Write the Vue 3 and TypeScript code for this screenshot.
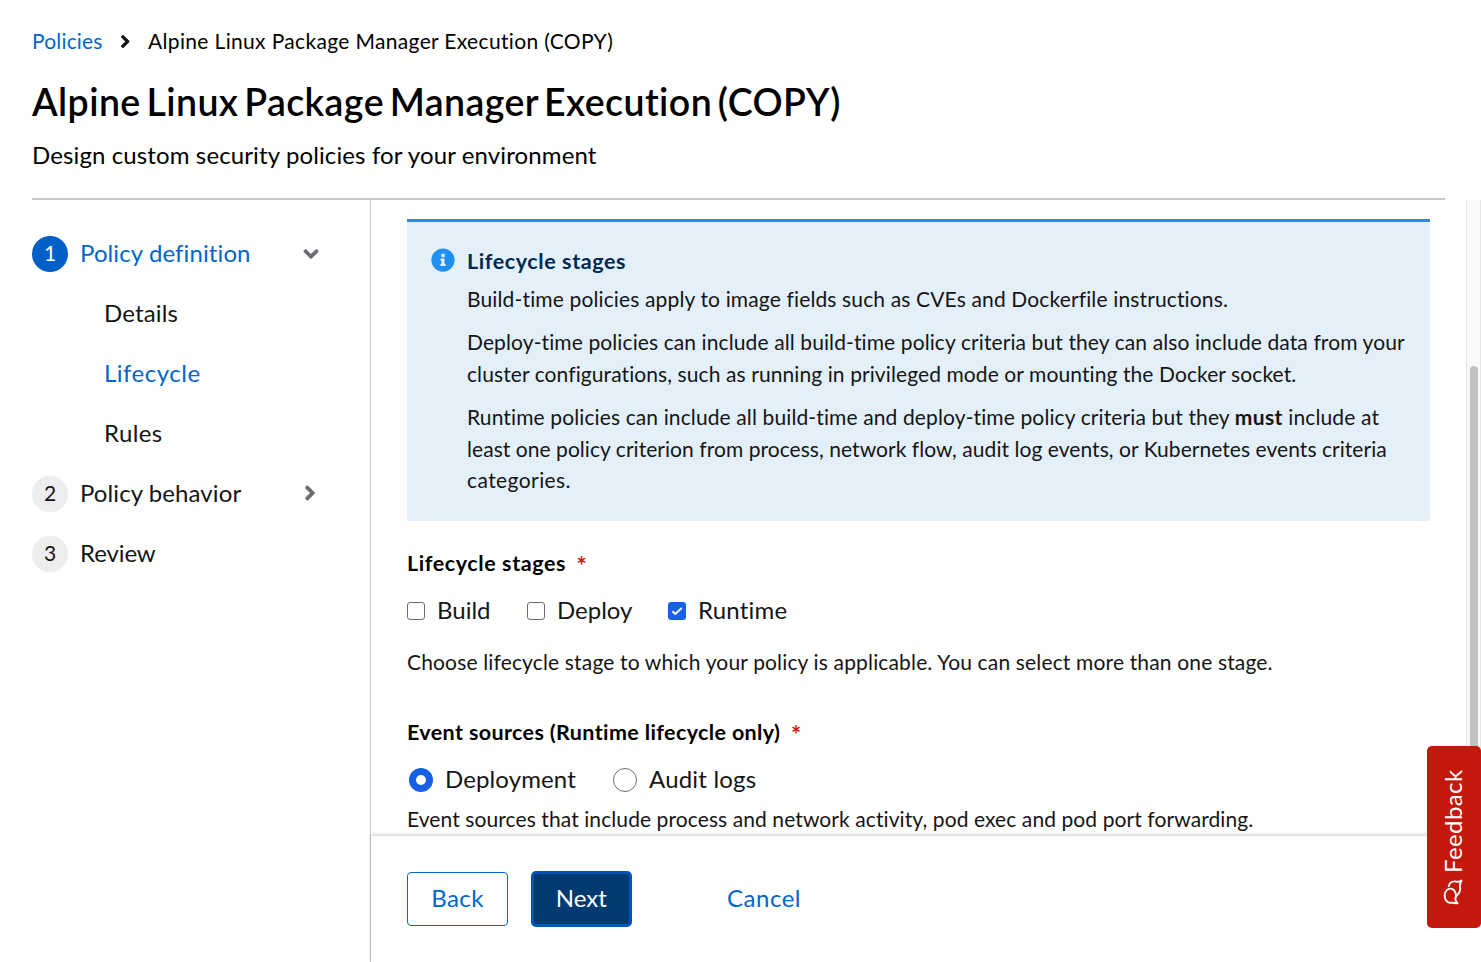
<script setup lang="ts">
interface SubStep { label: string; cls: string; current?: boolean }
interface Step { id: number; label: string; cls: string; current?: boolean; open?: boolean; children?: SubStep[]; expandable?: boolean }

const steps: Step[] = [
  {
    id: 1, label: 'Policy definition', cls: 't-def', current: true, expandable: true, open: true,
    children: [
      { label: 'Details', cls: 't-details' },
      { label: 'Lifecycle', cls: 't-life', current: true },
      { label: 'Rules', cls: 't-rules' },
    ],
  },
  { id: 2, label: 'Policy behavior', cls: 't-beh', expandable: true },
  { id: 3, label: 'Review', cls: 't-review' },
]

const stages = [
  { label: 'Build', checked: false, cls: 'c-build' },
  { label: 'Deploy', checked: false, cls: 'c-deploy' },
  { label: 'Runtime', checked: true, cls: 'c-runtime' },
]
const sources = [
  { label: 'Deployment', checked: true, cls: 'r-dep' },
  { label: 'Audit logs', checked: false, cls: 'r-audit' },
]
const angle = 'M224.3 273l-136 136c-9.4 9.4-24.6 9.4-33.9 0l-22.6-22.6c-9.4-9.4-9.4-24.6 0-33.9l96.4-96.4-96.4-96.4c-9.4-9.4-9.4-24.6 0-33.9L54.3 103c9.4-9.4 24.6-9.4 33.9 0l136 136c9.5 9.4 9.5 24.6.1 34z'
</script>

<template>
  <div class="page">
    <header class="head">
      <nav class="crumbs">
        <a class="crumb-link">Policies</a>
        <svg class="crumb-sep" viewBox="0 0 256 512"><path :d="angle" /></svg>
        <span class="crumb-cur">Alpine Linux Package Manager Execution (COPY)</span>
      </nav>
      <h1 class="title">Alpine Linux Package Manager Execution (COPY)</h1>
      <p class="subtitle">Design custom security policies for your environment</p>
    </header>
    <div class="body">
      <aside class="side">
        <template v-for="s in steps" :key="s.id">
          <div class="step" :class="{ current: s.current }">
            <span class="num">{{ s.id }}</span>
            <span class="step-label" :class="s.cls">{{ s.label }}</span>
            <svg v-if="s.expandable" class="chev" :class="{ open: s.open }" viewBox="0 0 256 512"><path :d="angle" /></svg>
          </div>
          <div v-for="c in s.children" :key="c.label" class="sub" :class="{ current: c.current }">
            <span class="sub-label" :class="c.cls">{{ c.label }}</span>
          </div>
        </template>
      </aside>
      <div class="right">
        <div class="scroll">
          <main class="content">
            <section class="alert">
              <svg class="info" viewBox="0 0 512 512"><path d="M256 8C119 8 8 119 8 256s111 248 248 248 248-111 248-248S393 8 256 8zm0 110c23.2 0 42 18.8 42 42s-18.8 42-42 42-42-18.8-42-42 18.8-42 42-42zm56 254c0 6.6-5.4 12-12 12h-88c-6.6 0-12-5.4-12-12v-24c0-6.6 5.4-12 12-12h12v-64h-12c-6.6 0-12-5.4-12-12v-24c0-6.6 5.4-12 12-12h64c6.6 0 12 5.4 12 12v100h12c6.6 0 12 5.4 12 12v24z" /></svg>
              <div class="alert-text">
                <h4><span>Lifecycle stages</span></h4>
                <p><span class="l1">Build-time policies apply to image fields such as CVEs and Dockerfile instructions.</span></p>
                <p><span class="l2">Deploy-time policies can include all build-time policy criteria but they can also include data from your</span><br><span class="l3">cluster configurations, such as running in privileged mode or mounting the Docker socket.</span></p>
                <p><span class="l4">Runtime policies can include all build-time and deploy-time policy criteria but they <b>must</b> include at</span><br><span class="l5">least one policy criterion from process, network flow, audit log events, or Kubernetes events criteria</span><br><span class="l6">categories.</span></p>
              </div>
            </section>
            <div class="label first"><span class="lab1">Lifecycle stages</span><span class="req">*</span></div>
            <div class="row">
              <label v-for="o in stages" :key="o.label" class="opt" :class="o.cls">
                <span class="box" :class="{ on: o.checked }"><svg v-if="o.checked" viewBox="0 0 18 18"><path d="M4.4 9.2l2.9 2.7L13.7 6" /></svg></span>
                <span class="opt-label">{{ o.label }}</span>
              </label>
            </div>
            <p class="help h1">Choose lifecycle stage to which your policy is applicable. You can select more than one stage.</p>
            <div class="label second"><span class="lab2">Event sources (Runtime lifecycle only)</span><span class="req">*</span></div>
            <div class="row radios">
              <label v-for="o in sources" :key="o.label" class="opt" :class="o.cls">
                <span class="radio" :class="{ on: o.checked }"></span>
                <span class="opt-label">{{ o.label }}</span>
              </label>
            </div>
            <p class="help h2">Event sources that include process and network activity, pod exec and pod port forwarding.</p>
          </main>
          <div class="track"><div class="thumb"></div></div>
        </div>
        <footer class="foot">
          <button class="btn back"><span>Back</span></button>
          <button class="btn next"><span>Next</span></button>
          <button class="btn cancel"><span>Cancel</span></button>
        </footer>
      </div>
    </div>
    <button class="feedback">
      <span>Feedback</span>
      <svg viewBox="0 0 20 26"><path d="M12.2 20.4A5.7 7.1 0 1 0 8.4 23.7C10.3 23.4 12.4 24.6 14.6 24.2C13.3 23.2 12.9 21.8 12.2 20.4z" /><path d="M5.6 8C6 4.3 8.7 2.3 11.7 2.4C14.3 2.6 16 3.4 18.5 1.6C17.9 3.3 16.7 4.8 17 7.2C17.6 11 16.3 14.8 13.6 16.6" /></svg>
    </button>
  </div>
</template>

<style>
body { margin: 0; background: #fff; }
</style>

<style scoped>
* { box-sizing: border-box; }
.page { position: relative; width: 1481px; height: 962px; overflow: hidden; display: flex; flex-direction: column; background: #fff; color: #151515; font-family: Lato, "Liberation Sans", sans-serif; font-size: 24px; white-space: nowrap; font-variant-ligatures: none; }
h1, h4, p { margin: 0; font-weight: 400; }
.head { margin: 0 36px 0 32px; height: 200px; border-bottom: 2px solid #c9c9c9; padding-top: 26px; color: #000; }
.crumbs { display: flex; align-items: center; height: 31px; font-size: 21px; }
.crumb-link, .crumb-cur { padding-bottom: 2px; }
.crumb-link { width: 88px; color: #0066cc; letter-spacing: .17px; }
.crumb-sep { width: 10.5px; height: 21px; margin-right: 17.5px; fill: #151515; }
.crumb-cur { letter-spacing: .34px; }
.title { margin-top: 21px; line-height: 47px; font-size: 37.5px; font-weight: 600; letter-spacing: .42px; word-spacing: -4px; }
.subtitle { margin-top: 12px; line-height: 36px; letter-spacing: .12px; }
.body { flex: 1; display: flex; min-height: 0; }
.side { width: 371px; border-right: 1px solid #c7c7c7; padding: 24px 48px 0 32px; }
.step, .sub { display: flex; align-items: center; height: 60px; }
.sub { padding-left: 72px; }
.num { width: 36px; height: 36px; margin-right: 12px; border-radius: 50%; background: #ededed; font-size: 21px; display: flex; align-items: center; justify-content: center; padding-bottom: 3px; }
.current { color: #0066cc; }
.current .num { background: #0060c8; color: #fff; }
.step-label { flex: 1; }
.step-label, .sub-label, .opt-label, .btn span { padding-bottom: 4px; }
.t-def { letter-spacing: .1px; }
.t-details { letter-spacing: .14px; }
.t-life { letter-spacing: .5px; }
.t-rules { letter-spacing: .4px; }
.t-beh { letter-spacing: .09px; }
.t-review { letter-spacing: -.1px; }
.chev { width: 12px; height: 24px; fill: #6a6e73; margin-right: 6px; transform: translateY(-1px); }
.chev.open { transform: translate(1px, 0) rotate(90deg); }
.right { flex: 1; display: flex; flex-direction: column; min-width: 0; }
.scroll { height: 636px; display: flex; overflow: hidden; }
.content { flex: 1; padding: 19px 36px 0; }
.alert { height: 302px; padding: 23px 24px; border-top: 3px solid #1f8ff0; background: #e3eff9; display: flex; font-size: 21px; line-height: 31.5px; }
.info { width: 24px; height: 24px; margin: 3px 12px 0 0; fill: #1f8ff0; }
.alert h4 { font-size: 21.5px; font-weight: 700; color: #002952; padding-top: 1px; margin-bottom: 5px; letter-spacing: .58px; }
.alert p + p { margin-top: 12px; }
.alert b { letter-spacing: .4px; }
.l1 { letter-spacing: .14px; }
.l2 { letter-spacing: .105px; }
.l3 { letter-spacing: .09px; }
.l4 { letter-spacing: .12px; }
.l5 { letter-spacing: .05px; }
.l6 { letter-spacing: .42px; }
.label { display: flex; height: 32px; align-items: center; font-size: 21.5px; font-weight: 700; color: #000; }
.label span { padding-bottom: 3px; }
.lab1 { letter-spacing: .58px; }
.lab2 { letter-spacing: .37px; }
.first { margin-top: 27px; }
.label .req { margin-left: 10.5px; color: #c9190b; font-size: 24px; font-weight: 700; line-height: 24px; padding: 3px 0 0; }
.row { display: flex; height: 36px; margin-top: 13px; align-items: center; }
.opt { display: flex; align-items: center; }
.c-build { width: 120px; }
.c-deploy { width: 141px; }
.c-runtime { letter-spacing: .2px; }
.box { width: 18px; height: 18px; border: 1px solid #6b6b7b; border-radius: 3px; margin-right: 12px; display: flex; }
.box.on { border: 0; background: #1760e6; }
.box svg { width: 18px; fill: none; stroke: #fff; stroke-width: 2; }
.help { font-size: 21px; line-height: 32px; }
.h1 { margin-top: 17px; letter-spacing: .155px; }
.second { margin-top: 39px; }
.r-dep { width: 204px; letter-spacing: .12px; }
.r-audit { letter-spacing: .2px; }
.radios { padding-left: 2px; }
.radio { width: 24px; height: 24px; border: 1px solid #6b6b7b; border-radius: 50%; margin-right: 12px; }
.radio.on { border: 7px solid #1760e6; }
.h2 { margin-top: 5px; letter-spacing: .09px; }
.foot { position: relative; flex: 1; display: flex; align-items: flex-start; padding: 36px 36px 0; background: #fff; box-shadow: 0 -1px 4px rgba(0,0,0,.22); }
.btn { height: 54px; width: 101px; border: 1px solid #0066cc; border-radius: 4px; background: #fff; color: #0066cc; font: inherit; padding: 0; display: flex; align-items: center; justify-content: center; }
.back { letter-spacing: .4px; }
.next { width: 99.5px; margin-left: 23.5px; background: #003a70; color: #fff; border: 2px solid #0054b8; box-shadow: 0 0 0 1px #0054b8; }
.cancel { margin-left: 73px; width: 120px; border-color: transparent; letter-spacing: .5px; }
.track { width: 15px; background: #f9f9f9; border: solid #e6e6e6; border-width: 0 1px; padding: 166px 3px 0; }
.thumb { width: 8px; height: 466px; border-radius: 4px; background: #c1c1c1; }
.feedback { position: absolute; right: 0; top: 746px; width: 54px; height: 182px; border: 0; border-radius: 5px; background: #c4180c; color: #fff; font: inherit; display: flex; flex-direction: column; align-items: center; padding: 23px 2px 0 0; }
.feedback span { writing-mode: vertical-rl; transform: rotate(180deg); height: 104px; line-height: 28px; letter-spacing: .4px; margin-right: 1px; }
.feedback svg { width: 20px; height: 26px; flex: none; margin-top: 6px; fill: none; stroke: #fff; stroke-width: 1.9; stroke-linejoin: round; }
</style>
